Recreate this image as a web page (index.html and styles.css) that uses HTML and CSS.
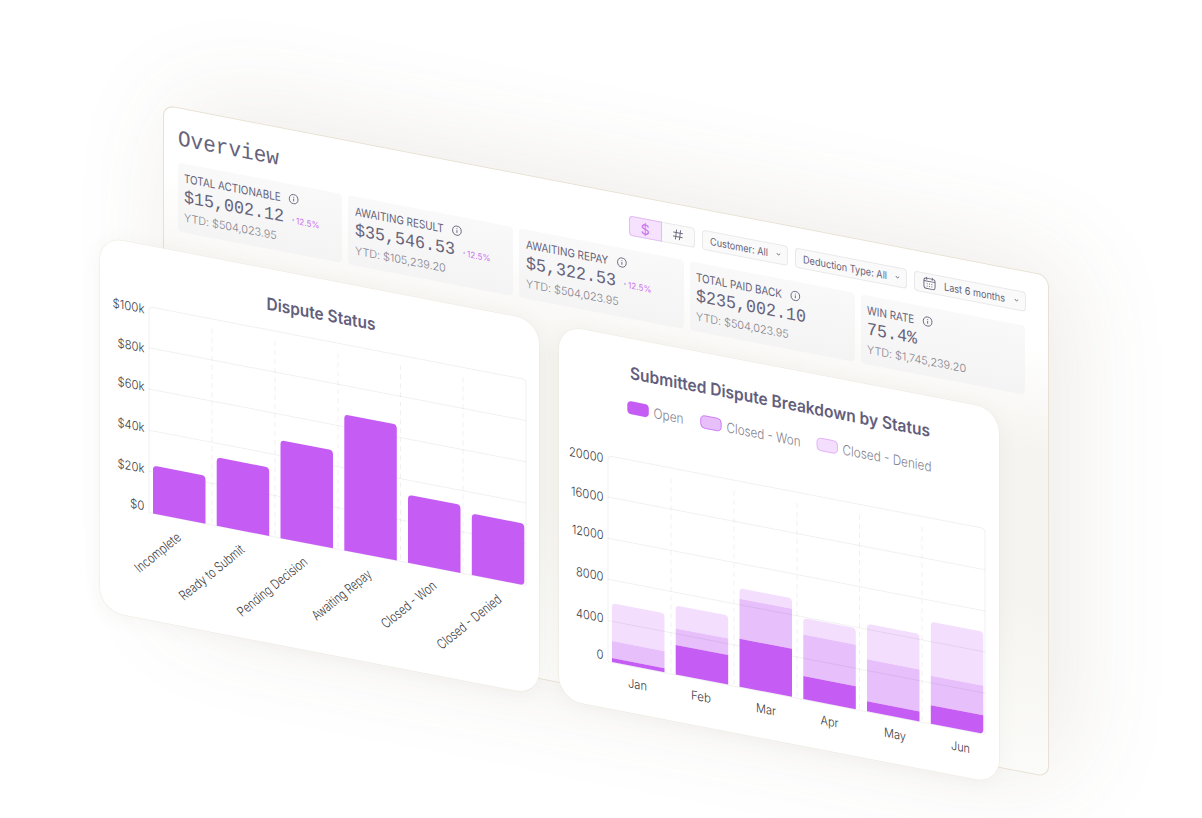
FILE: index.html
```html
<!DOCTYPE html>
<html lang="en">
<head>
  <meta charset="UTF-8" />
  <meta name="viewport" content="width=device-width, initial-scale=1.0"/>
  <title>Overview</title>
  <link rel="stylesheet" href="styles.css">
</head>
<body>
  <!-- Shared icons -->
  <svg class="sprite">
    <symbol id="info" viewBox="0 0 12 12">
      <circle cx="6" cy="6" r="5" fill="none" stroke="currentColor"/>
      <path d="M6 5.4v3M6 3.4v1" stroke="currentColor" fill="none"/>
    </symbol>
    <symbol id="chevron" viewBox="0 0 6 4">
      <path d="M1 1l2 2 2-2" stroke="currentColor" fill="none"/>
    </symbol>
  </svg>

  <div class="stage">
    <!-- Overview panel -->
    <div class="panel">
      <h1>Overview</h1>
      <div class="toolbar">
        <div class="toggle">
          <span class="active">$</span>
          <span>
            <svg width="12" height="12" viewBox="0 0 12 12"><path d="M4.6 1L3.4 11M8.6 1L7.4 11M1.3 4h9.6M1 8h9.6" stroke="currentColor" stroke-width="0.9" fill="none"/></svg>
          </span>
        </div>
        <div class="select customer"><span>Customer: All</span><svg class="chevron"><use href="#chevron"/></svg></div>
        <div class="select deduction"><span>Deduction Type: All</span><svg class="chevron"><use href="#chevron"/></svg></div>
        <div class="select range">
          <svg class="calendar" viewBox="0 0 14 14">
            <rect x="1" y="2" width="12" height="11" rx="2.5" fill="none" stroke="currentColor"/>
            <path d="M1 5h12M4 .5v3M10 .5v3" fill="none" stroke="currentColor"/>
            <path d="M4 7.8h1M6.5 7.8h1M9 7.8h1M4 10.3h1M6.5 10.3h1M9 10.3h1" stroke="currentColor"/>
          </svg>
          <span>Last 6 months</span><svg class="chevron"><use href="#chevron"/></svg>
        </div>
      </div>
      <div class="stats">
        <div class="stat">
          <div class="label">TOTAL ACTIONABLE <svg class="info"><use href="#info"/></svg></div>
          <div class="value">$15,002.12 <span class="change">12.5%</span></div>
          <div class="ytd">YTD: $504,023.95</div>
        </div>
        <div class="stat">
          <div class="label">AWAITING RESULT <svg class="info"><use href="#info"/></svg></div>
          <div class="value">$35,546.53 <span class="change">12.5%</span></div>
          <div class="ytd">YTD: $105,239.20</div>
        </div>
        <div class="stat">
          <div class="label">AWAITING REPAY <svg class="info"><use href="#info"/></svg></div>
          <div class="value">$5,322.53 <span class="change">12.5%</span></div>
          <div class="ytd">YTD: $504,023.95</div>
        </div>
        <div class="stat">
          <div class="label">TOTAL PAID BACK <svg class="info"><use href="#info"/></svg></div>
          <div class="value">$235,002.10</div>
          <div class="ytd">YTD: $504,023.95</div>
        </div>
        <div class="stat">
          <div class="label">WIN RATE <svg class="info"><use href="#info"/></svg></div>
          <div class="value">75.4%</div>
          <div class="ytd">YTD: $1,745,239.20</div>
        </div>
      </div>
    </div>

    <!-- Chart cards in front of the panel -->
    <div class="charts">
      <div class="card">
        <svg width="440" height="373" viewBox="0 0 440 373">
          <text class="title" x="166.5" y="40" textLength="109" lengthAdjust="spacingAndGlyphs">Dispute Status</text>
          <g class="grid">
            <path d="M49 266V64q0-4 4-4H422q4 0 4 4V266"/>
            <path d="M49 101H426M49 142.2H426M49 183.4H426M49 224.6H426M49 266H426"/>
            <path class="dashed" d="M112 70V266M175 70V266M238 70V266M300.5 70V266M363 70V266"/>
          </g>
          <g class="tick end">
            <text x="44.5" y="67.5" textLength="32" lengthAdjust="spacingAndGlyphs">$100k</text>
            <text x="44.5" y="106.5" textLength="27" lengthAdjust="spacingAndGlyphs">$80k</text>
            <text x="44.5" y="145" textLength="27" lengthAdjust="spacingAndGlyphs">$60k</text>
            <text x="44.5" y="186" textLength="27" lengthAdjust="spacingAndGlyphs">$40k</text>
            <text x="44.5" y="227" textLength="27" lengthAdjust="spacingAndGlyphs">$20k</text>
            <text x="44.5" y="264.5" textLength="14.5" lengthAdjust="spacingAndGlyphs">$0</text>
          </g>
          <g class="open">
            <path d="M53 266V222q0-4 4-4h44.5q4 0 4 4V266z"/>
            <path d="M116.7 266V201.5q0-4 4-4h44.5q4 0 4 4V266z"/>
            <path d="M180.5 266V172q0-4 4-4h44.5q4 0 4 4V266z"/>
            <path d="M244.3 266V134q0-4 4-4h44.5q4 0 4 4V266z"/>
            <path d="M308 266V202q0-4 4-4h44.5q4 0 4 4V266z"/>
            <path d="M371.8 266V208.5q0-4 4-4h44.5q4 0 4 4V262q0 4-4 4z"/>
          </g>
          <g class="tick end">
            <text transform="translate(82 286) rotate(-45)" textLength="60" lengthAdjust="spacingAndGlyphs">Incomplete</text>
            <text transform="translate(145.5 286) rotate(-45)" textLength="87" lengthAdjust="spacingAndGlyphs">Ready to Submit</text>
            <text transform="translate(208.5 286) rotate(-45)" textLength="94" lengthAdjust="spacingAndGlyphs">Pending Decision</text>
            <text transform="translate(272.5 286) rotate(-45)" textLength="79" lengthAdjust="spacingAndGlyphs">Awaiting Repay</text>
            <text transform="translate(337.5 285) rotate(-45)" textLength="73" lengthAdjust="spacingAndGlyphs">Closed - Won</text>
            <text transform="translate(402.5 286) rotate(-45)" textLength="86" lengthAdjust="spacingAndGlyphs">Closed - Denied</text>
          </g>
        </svg>
      </div>

      <div class="card">
        <svg width="440" height="373" viewBox="0 0 440 373">
          <text class="title" x="71" y="39.5" textLength="300" lengthAdjust="spacingAndGlyphs">Submitted Dispute Breakdown by Status</text>
          <g class="legend">
            <rect class="open" x="68.3" y="61.5" width="21.5" height="13" rx="4"/>
            <text x="94.5" y="74" textLength="30" lengthAdjust="spacingAndGlyphs">Open</text>
            <rect class="won outline" x="141.7" y="61.8" width="20.5" height="12.5" rx="4"/>
            <text x="167.5" y="74" textLength="74" lengthAdjust="spacingAndGlyphs">Closed - Won</text>
            <rect class="denied outline pale" x="258" y="61.8" width="20.5" height="12.5" rx="4"/>
            <text x="283.5" y="74" textLength="89" lengthAdjust="spacingAndGlyphs">Closed - Denied</text>
          </g>
          <g class="denied">
            <path d="M53 305V271q0-4 4-4h44.5q4 0 4 4V305z"/>
            <path d="M116.7 280V261q0-4 4-4h44.5q4 0 4 4V280z"/>
            <path d="M180.5 238V231.5q0-4 4-4h44.5q4 0 4 4V238z"/>
            <path d="M244.3 261.5V249q0-4 4-4h44.5q4 0 4 4V261.5z"/>
            <path d="M308 274V242.5q0-4 4-4h44.5q4 0 4 4V274z"/>
            <path d="M371.8 278V228q0-4 4-4h44.5q4 0 4 4V278z"/>
          </g>
          <g class="won">
            <path d="M53 305h52.5v17H53z"/>
            <path d="M116.7 280h52.5v16.5h-52.5z"/>
            <path d="M180.5 238H233v40h-52.5z"/>
            <path d="M244.3 261.5h52.5V303h-52.5z"/>
            <path d="M308 274h52.5v42H308z"/>
            <path d="M371.8 278h52.5v29.5h-52.5z"/>
          </g>
          <g class="grid">
            <path d="M49 326V124.5q0-4 4-4H422q4 0 4 4V326"/>
            <path d="M49 161.6H426M49 202.8H426M49 244H426M49 285.2H426M49 326.5H426"/>
            <path class="dashed" d="M112 131V326M175 131V326M238 131V326M300.5 131V326M363 131V326"/>
          </g>
          <g class="open">
            <path d="M53 322h52.5v4H53z"/>
            <path d="M116.7 296.5h52.5V326h-52.5z"/>
            <path d="M180.5 278H233v48h-52.5z"/>
            <path d="M244.3 303h52.5v23h-52.5z"/>
            <path d="M308 316h52.5v10H308z"/>
            <path d="M371.8 307.5h52.5V322q0 4-4 4h-48.5z"/>
          </g>
          <g class="tick end">
            <text x="44.5" y="128" textLength="34.5" lengthAdjust="spacingAndGlyphs">20000</text>
            <text x="44.5" y="167" textLength="32.5" lengthAdjust="spacingAndGlyphs">16000</text>
            <text x="44.5" y="205" textLength="31.5" lengthAdjust="spacingAndGlyphs">12000</text>
            <text x="44.5" y="246.5" textLength="27.5" lengthAdjust="spacingAndGlyphs">8000</text>
            <text x="44.5" y="288" textLength="27.5" lengthAdjust="spacingAndGlyphs">4000</text>
            <text x="44.5" y="325" textLength="7" lengthAdjust="spacingAndGlyphs">0</text>
          </g>
          <g class="tick middle">
            <text x="78.5" y="348" textLength="19" lengthAdjust="spacingAndGlyphs">Jan</text>
            <text x="142" y="348" textLength="20" lengthAdjust="spacingAndGlyphs">Feb</text>
            <text x="207" y="348" textLength="20" lengthAdjust="spacingAndGlyphs">Mar</text>
            <text x="270.5" y="348" textLength="18" lengthAdjust="spacingAndGlyphs">Apr</text>
            <text x="336" y="348" textLength="22" lengthAdjust="spacingAndGlyphs">May</text>
            <text x="401.5" y="348" textLength="19" lengthAdjust="spacingAndGlyphs">Jun</text>
          </g>
        </svg>
      </div>
    </div>
  </div>
</body>
</html>
```
FILE: styles.css
```css
* {
  margin: 0;
  padding: 0;
  box-sizing: border-box;
}
html {
  overflow: hidden;
}
body {
  height: 818px;
  overflow: hidden;
  background: #fff;
  font-family: Inter, "Liberation Sans", sans-serif;
  color: #66637a;
}
.sprite {
  display: none;
}
/* Everything sits on one slanted plane */
.stage {
  position: relative;
  width: 1048.5px;
  height: 592px;
  padding: 72.5px 0 0 162.5px;
  transform: matrix(1, 0.193, 0, 1, 0, 0);
  transform-origin: 0 0;
}
.panel {
  width: 886px;
  height: 502px;
  padding: 19.5px 22px 0 14px;
  border: 1px solid #e8e0d3;
  border-radius: 11px;
  background: linear-gradient(#fff 14%, #f5f4f0 36%, #f5f4f0 65%, #fbfbf9);
  box-shadow: 16px -6px 105px rgba(110, 95, 60, 0.13);
}
.panel h1 {
  width: 110px;
  height: 1px;
  font-family: "Liberation Mono", monospace;
  font-size: 22.5px;
  font-weight: 400;
  line-height: 25px;
  transform: scaleX(0.935);
  transform-origin: 0 0;
}
.toolbar {
  display: flex;
  justify-content: flex-end;
  gap: 7px;
  height: 20px;
  font-size: 10.5px;
}
.toggle,
.select {
  display: flex;
  align-items: center;
  border: 1px solid #e9e9eb;
  border-radius: 4px;
  background: #fafafa;
}
.toggle {
  width: 66px;
}
.toggle span {
  display: flex;
  flex: 1;
  align-items: center;
  justify-content: center;
  height: 20px;
}
.toggle .active {
  margin-left: -1px;
  border: 1px solid #e2bdf4;
  border-radius: 4px 0 0 4px;
  background: #f6e1fe;
  color: #c772ee;
  font-size: 14px;
}
.select {
  justify-content: space-between;
  padding: 0 6px 0 7px;
  white-space: nowrap;
}
.select span {
  width: 0;
  flex: 1;
  transform: scaleX(0.87);
  transform-origin: 0 50%;
}
.customer {
  width: 86px;
}
.deduction {
  width: 112px;
}
.range {
  width: 112px;
  padding-left: 8px;
}
.range span {
  margin-left: 8px;
}
.chevron {
  width: 5px;
  height: 4px;
}
.calendar {
  width: 13px;
  height: 14px;
}
.stats {
  display: flex;
  gap: 6px;
  margin-top: 14px;
}
.stat {
  flex: 1;
  height: 68.5px;
  padding: 7px 6.5px 0;
  border-radius: 4px;
  background: linear-gradient(#f9f9fa, #f4f4f4);
}
.label {
  display: flex;
  align-items: center;
  gap: 9px;
  height: 15px;
  font-size: 11.5px;
  white-space: nowrap;
  transform: scaleX(0.86);
  transform-origin: 0 0;
}
.info {
  width: 13px;
  height: 11px;
  overflow: visible;
  transform: scaleX(1.1);
}
.value {
  display: flex;
  align-items: center;
  height: 23px;
  font-family: "Liberation Mono", monospace;
  font-size: 18px;
  white-space: nowrap;
  transform: scaleX(0.925);
  transform-origin: 0 0;
}
.change {
  display: flex;
  align-items: center;
  gap: 2px;
  margin-left: 9px;
  padding-top: 3px;
  font-family: Inter, sans-serif;
  font-size: 8.8px;
  color: #cb70f0;
}
.change::before {
  content: "";
  border: 1.5px solid transparent;
  border-top: 0;
  border-bottom: 2px solid #a68fe0;
}
.ytd {
  height: 17px;
  font-size: 11px;
  font-weight: 300;
  line-height: 18px;
  letter-spacing: -0.05px;
  white-space: nowrap;
  color: #85848e;
  transform: scaleX(0.99);
  transform-origin: 0 0;
}
.charts {
  position: absolute;
  top: 216.5px;
  left: 99.5px;
  display: flex;
  gap: 20px;
}
.card {
  width: 439.8px;
  height: 374.5px;
  padding-top: 1px;
  border-radius: 23px;
  background: #fff;
  box-shadow: 0 0 0 0.5px #eee9df, 0 2px 20px rgba(110, 95, 60, 0.06);
}
.card svg {
  display: block;
  font-family: Inter, "Liberation Sans", sans-serif;
}
.title {
  font-size: 17px;
  font-weight: 600;
  fill: #625e7c;
}
.grid path {
  fill: none;
  stroke: rgba(0, 0, 0, 0.06);
}
.grid .dashed {
  stroke-dasharray: 5 4;
}
.tick {
  font-size: 12.5px;
  font-weight: 300;
  fill: #3c3b43;
}
.end {
  text-anchor: end;
}
.middle {
  text-anchor: middle;
}
.legend text {
  font-size: 14px;
  font-weight: 300;
  fill: #858390;
}
.open {
  fill: #c55df5;
}
.won {
  fill: #e7bffb;
}
.denied {
  fill: #f3defd;
}
.outline {
  stroke: #c96bf2;
  stroke-width: 0.8;
}
.pale {
  stroke: #dfa6f6;
}
```
